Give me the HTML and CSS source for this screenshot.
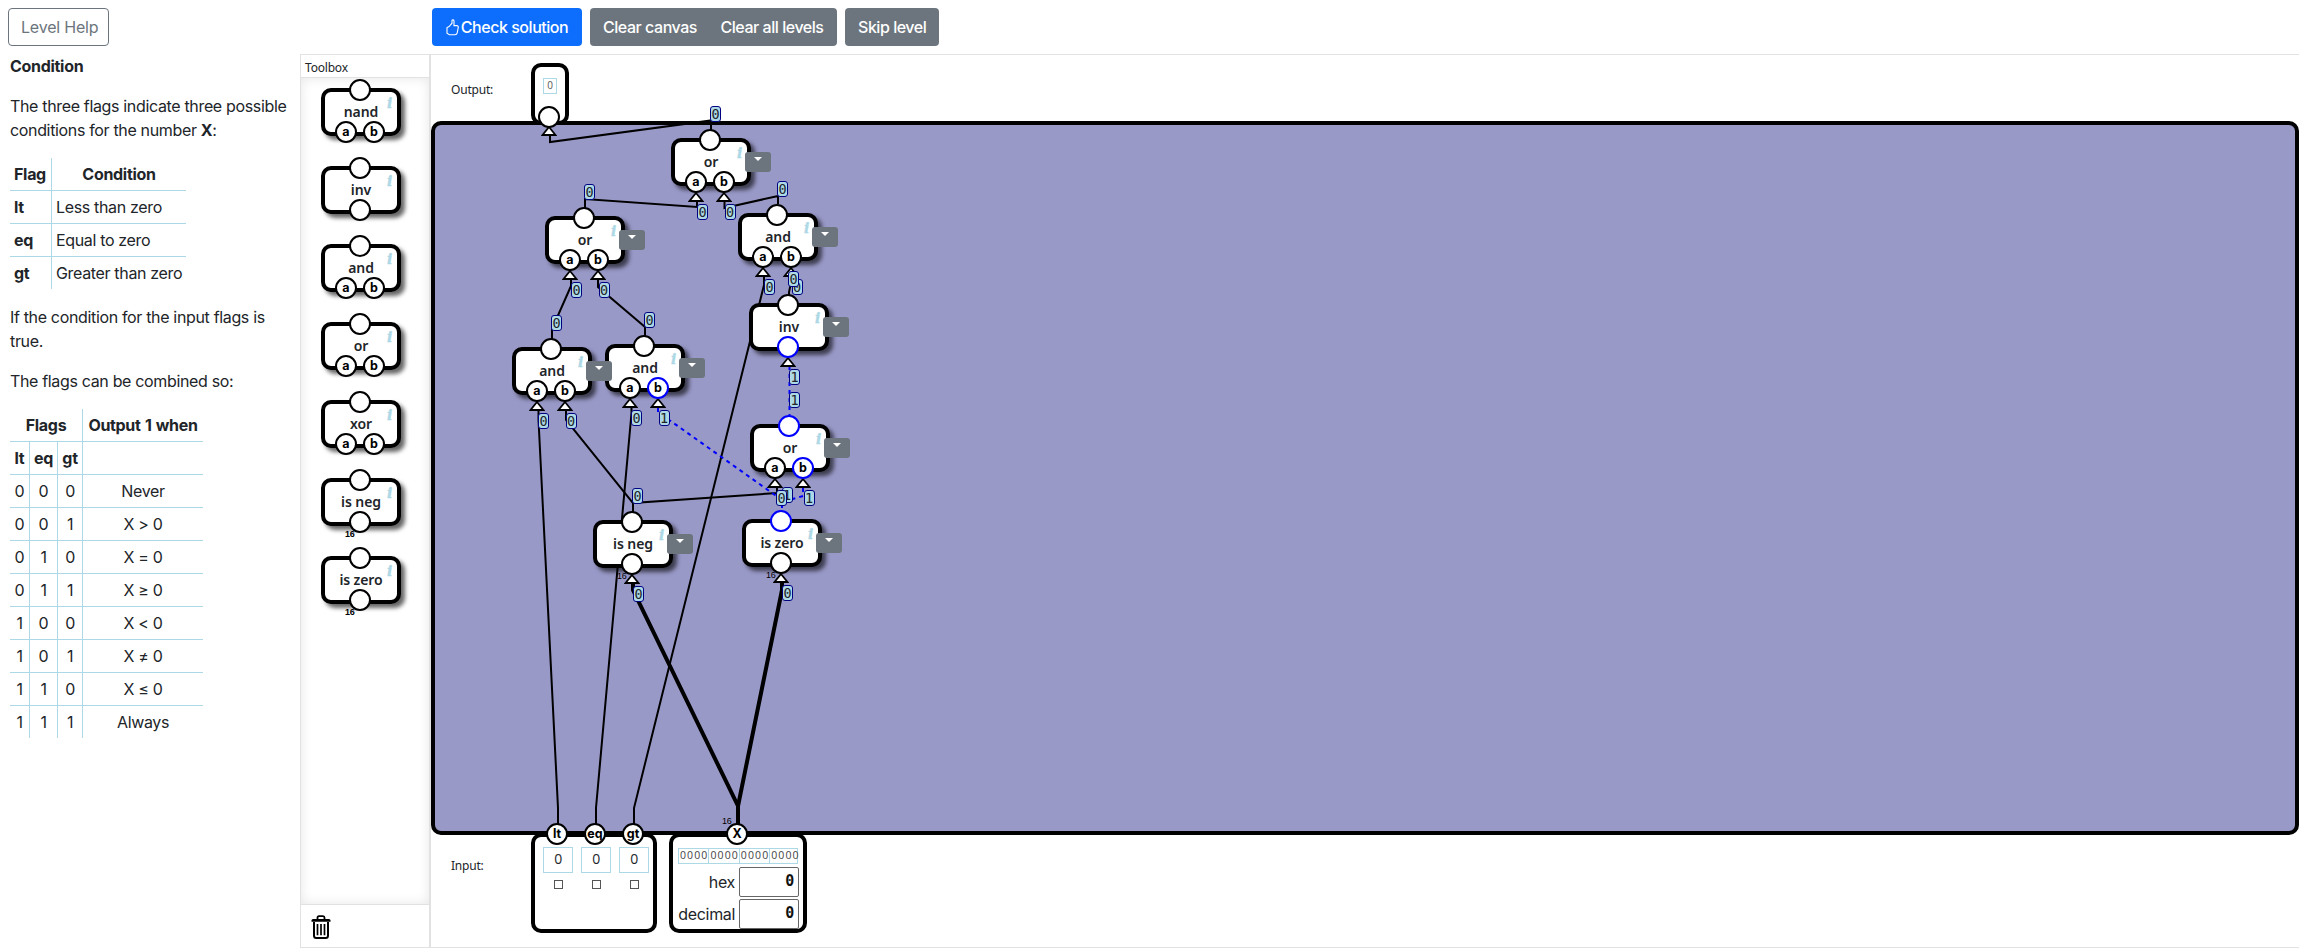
FILE: index.html
```html
<!DOCTYPE html>
<html lang="en">
<head>
<meta charset="utf-8">
<title>Condition</title>
<link rel="stylesheet" href="styles.css">
</head>
<body>
<div class="app">
  <aside class="help">
    <button class="btn btn-outline">Level Help</button>
    <div class="help-text">
      <p><b>Condition</b></p>
      <p>The three flags indicate three possible<br>conditions for the number <b>X</b>:</p>
      <table class="flags">
        <tr><th>Flag</th><th class="mid">Condition</th></tr>
        <tr><th>lt</th><td>Less than zero</td></tr>
        <tr><th>eq</th><td>Equal to zero</td></tr>
        <tr><th>gt</th><td>Greater than zero</td></tr>
      </table>
      <p>If the condition for the input flags is<br>true.</p>
      <p>The flags can be combined so:</p>
      <table class="combos">
        <colgroup><col class="c1"><col class="c2"><col class="c3"><col class="c4"></colgroup>
        <tr><th colspan="3">Flags</th><th class="wide">Output 1 when</th></tr>
        <tr><th>lt</th><th>eq</th><th>gt</th><th></th></tr>
        <tr><td>0</td><td>0</td><td>0</td><td>Never</td></tr>
        <tr><td>0</td><td>0</td><td>1</td><td>X &gt; 0</td></tr>
        <tr><td>0</td><td>1</td><td>0</td><td>X = 0</td></tr>
        <tr><td>0</td><td>1</td><td>1</td><td>X ≥ 0</td></tr>
        <tr><td>1</td><td>0</td><td>0</td><td>X &lt; 0</td></tr>
        <tr><td>1</td><td>0</td><td>1</td><td>X ≠ 0</td></tr>
        <tr><td>1</td><td>1</td><td>0</td><td>X ≤ 0</td></tr>
        <tr><td>1</td><td>1</td><td>1</td><td>Always</td></tr>
      </table>
    </div>
  </aside>
  <div class="main">
    <header class="bar">
      <button class="btn btn-primary"><svg class="thumb" viewBox="0 0 13 17"><path d="M3.2 7.5 6 4.2V1.6C6 .6 8 .5 8 2.2V6.6h2.6c1.5 0 1.9 1 1.6 2.2l-1 5c-.3 1.3-1 1.9-2.2 1.9H3.4L1 14.2V8.6L3.2 7.5"/></svg>Check solution</button>
      <div class="group"><button class="btn btn-grey">Clear canvas</button><button class="btn btn-grey">Clear all levels</button></div>
      <button class="btn btn-grey skip">Skip level</button>
    </header>
    <div class="work">
      <section class="toolbox">
        <div class="toolbox-title">Toolbox</div>
        <div class="tools" id="tools"></div>
        <div class="bin">
          <svg viewBox="0 0 20 24"><path d="M6.5 4V2.8Q6.5 1.2 8 1.2H12Q13.5 1.2 13.500 2.800V4" fill="none" stroke="#000" stroke-width="1.8"/><path d="M.5 6.800V5.600Q.5 4 2 4H18Q19.500 4 19.500 5.600V6.800Z"/><path d="M3 7V20.500Q3 23 5.200 23H14.800Q17 23 17 20.500V7" fill="none" stroke="#000" stroke-width="2"/><path d="M6.500 9V20.300M10 9V20.300M13.500 9V20.300" stroke="#000" stroke-width="1.700"/></svg>
        </div>
      </section>
      <section class="stage">
        <div class="io output">
          <span class="io-label">Output:</span>
          <div class="io-box out-box"><span class="bit small">0</span></div>
        </div>
        <div class="canvas"></div>
        <div class="io input">
          <span class="io-label">Input:</span>
          <div class="io-box flag-box">
            <div class="flag"><span class="bit">0</span><i class="check"></i></div>
            <div class="flag"><span class="bit">0</span><i class="check"></i></div>
            <div class="flag"><span class="bit">0</span><i class="check"></i></div>
          </div>
          <div class="io-box word-box">
            <div class="nibbles"><span>0000</span><span>0000</span><span>0000</span><span>0000</span></div>
            <label class="field">hex<span class="value">0</span></label>
            <label class="field">decimal<span class="value">0</span></label>
          </div>
        </div>
        <svg class="wires" viewBox="431 55 1868 892">
          <path d="M550 135V142L711 120.500V130"/>
          <path d="M697 199V207L585 199V208"/>
          <path d="M724.500 199V208L778 196V204"/>
          <path d="M571 277V286L552 329V340"/>
          <path d="M598 277V287L645 327V336"/>
          <path d="M764 275V285L634 808V825"/>
          <path d="M791 275V283L789 292V300"/>
          <path d="M538.500 409V420L558 808V825"/>
          <path d="M566 409V420L633 503V512"/>
          <path d="M631.500 406V413L596 808V825"/>
          <path d="M777 486V493L633 503V512"/>
          <path class="bus" d="M633 582V590L738 806V825"/>
          <path class="bus" d="M782 581V590L738 806V825"/>
          <path class="on" d="M789.500 366V415"/>
          <path class="on" d="M658 408V412L782 500V511"/>
          <path class="on" d="M803 488V496L782 502"/>
        </svg>
        <div class="nodes" id="nodes"></div>
      </section>
    </div>
  </div>
</div>
<script src="app.js"></script>
</body>
</html>
```
FILE: styles.css
```css
* { box-sizing: border-box; }
body {
  margin: 0;
  font: 16px/24px Inter, "Liberation Sans", sans-serif;
  letter-spacing: -0.34px;
  color: #212529;
  background: #fff;
}
.app { display: flex; width: 2299px; height: 948px; overflow: hidden; }
.help { width: 300px; padding: 8px 0 0 8px; flex: none; }
.help-text { padding: 8px 0 0 2px; white-space: nowrap; }
p { margin: 0 0 16px; }
b, th { font-weight: 700; letter-spacing: -0.3px; }

.btn {
  height: 38px;
  padding: 0 12px;
  border: 1px solid transparent;
  border-radius: 4px;
  font: inherit;
  letter-spacing: -0.46px;
  white-space: nowrap;
  color: #fff;
}
.btn-outline { display: block; width: 101px; background: #fff; border-color: #6c757d; color: #6c757d; letter-spacing: -0.2px; }
.btn-primary { width: 150px; background: #0d6efd; display: flex; align-items: center; justify-content: center; font-weight: 500; }
.btn-grey { background: #6c757d; font-weight: 500; }
.thumb { width: 13px; height: 17px; margin-right: 2px; fill: none; stroke: #fff; stroke-width: 1.1; }

table { border-collapse: collapse; margin-bottom: 16px; table-layout: fixed; }
th, td { height: 33px; padding: 4px; line-height: 24px; border: 1px solid lightblue; }
tr:first-child > * { border-top: 0; height: 32px; padding-bottom: 3px; }
tr:last-child > * { border-bottom: 0; }
tr > :first-child { border-left: 0; }
tr > :last-child { border-right: 0; }
.flags { width: 176px; }
.flags th { width: 41.500px; text-align: left; }
.flags .mid { width: auto; text-align: center; }
.combos { width: 193px; text-align: center; }
.combos th, .combos td { padding-left: 0; padding-right: 0; }
.combos .wide { letter-spacing: -0.35px; word-spacing: 1px; }
.c1 { width: 19.500px; }
.c2 { width: 28px; }
.c3 { width: 25px; }

.main { flex: 1; display: flex; flex-direction: column; }
.bar { height: 54px; flex: none; padding: 8px 0 0 132px; display: flex; gap: 8px; }
.group { display: flex; width: 247px; }
.group .btn:first-child { border-radius: 4px 0 0 4px; width: 117px; }
.group .btn:last-child { border-radius: 0 4px 4px 0; flex: 1; }
.skip { width: 94px; }
.work { flex: 1; display: flex; border: 1px solid #e2e2e2; border-right: 0; }

.toolbox { width: 130px; flex: none; display: flex; flex-direction: column; border-right: 2px solid #e2e2e2; }
.toolbox-title, .io-label { font: 12px/14px "Noto Sans", sans-serif; letter-spacing: -0.2px; }
.toolbox-title { height: 23px; padding: 6px 0 0 4px; border-bottom: 1px solid #e2e2e2; }
.tools {
  flex: 1;
  padding: 10px 0 0 20px;
  display: flex;
  flex-direction: column;
  gap: 30px;
  box-shadow: inset 0 0 12px rgba(0, 0, 0, .1);
}
.bin { height: 43px; border-top: 1px solid #e2e2e2; padding: 10px 0 0 10px; }
.bin svg { width: 20px; height: 24px; display: block; }

.stage { flex: 1; position: relative; display: flex; flex-direction: column; }
.io { display: flex; padding-left: 20px; }
.io-label { width: 80px; flex: none; }
.output { height: 66px; padding-top: 8px; }
.output .io-label { padding-top: 20px; }
.io-box { border: 4px solid #000; border-radius: 10px; background: #fff; }
.out-box { width: 38px; height: 62px; display: flex; justify-content: center; padding-top: 11px; }
.canvas { height: 714px; border: 4px solid #000; border-radius: 10px; background: #9999c8; }
.bit {
  width: 30px;
  height: 26px;
  border: 1px solid lightblue;
  font: 14px/22px "Open Sans", sans-serif;
  text-align: center;
}
.bit.small { width: 14px; height: 16px; font-size: 10px; line-height: 13px; color: #555; }
.input { margin-top: -2px; height: 100px; }
.input .io-label { padding-top: 26px; }
.flag-box { width: 126px; display: flex; gap: 8px; padding: 10px 0 0 8px; }
.flag { display: flex; flex-direction: column; align-items: center; gap: 7px; }
.check { width: 9px; height: 9px; border: 1px solid #555; }
.word-box { width: 138px; margin-left: 12px; padding: 11px 4px 0 5px; }
.nibbles { width: 120px; height: 16px; display: flex; border: 1px solid lightblue; }
.nibbles span { flex: 1; text-align: center; font: 10.500px/13px "Open Sans", sans-serif; letter-spacing: 1.100px; padding-left: 1px; color: #444; }
.nibbles span + span { border-left: 1px solid lightblue; }
.field { display: flex; justify-content: flex-end; align-items: center; gap: 4px; margin-top: 3px; height: 29px; }
.field + .field { margin-top: 3px; }
.value {
  width: 60px;
  height: 30px;
  padding-right: 4px;
  border: 1px solid #666;
  border-radius: 2px;
  font: bold 15px/27px "DejaVu Sans Mono", monospace;
  text-align: right;
  color: #111;
}

.wires { position: absolute; left: 0; top: 0; width: 1868px; height: 892px; fill: none; stroke: #000; stroke-width: 2; }
.wires .bus { stroke-width: 4; }
.wires .on { stroke: #00f; stroke-dasharray: 4 4; }
.nodes { position: absolute; left: 0; top: 0; }
.nodes > * { position: absolute; }

.gate { position: relative; width: 80px; height: 48px; flex: none; }
.nodes .gate { position: absolute; }
.gate-body {
  height: 48px;
  border: 4px solid #000;
  border-radius: 10px;
  background: #fff;
  box-shadow: 4px 4px 4px rgba(0, 0, 0, .6);
  font: 600 14px/39px "Noto Sans", sans-serif;
  letter-spacing: -0.1px;
  text-align: center;
}
.info {
  position: absolute;
  left: 66px;
  top: 7px;
  font: italic bold 14px/16px "DejaVu Serif", serif;
  color: lightblue;
  -webkit-text-stroke: .4px lightblue;
}
.port {
  position: absolute;
  width: 22px;
  height: 22px;
  margin: -11px 0 0 -11px;
  border: 2px solid #000;
  border-radius: 50%;
  background: #fff;
  font: bold 12.500px/17px Inter, sans-serif;
  letter-spacing: 0;
  display: flex;
  justify-content: center;
  color: #000;
  white-space: nowrap;
}
.port.on { border-color: #00f; }
.width { position: absolute; font: 9px/10px "Liberation Sans", sans-serif; letter-spacing: -0.2px; color: #000; }
.tools .width { font-weight: bold; }
.arrow { position: absolute; width: 16px; height: 10px; margin-left: -8px; fill: #fff; stroke: #000; stroke-width: 1.800; }
.menu { position: absolute; z-index: 1; left: 74px; top: 14px; width: 26px; height: 20px; border-radius: 3px; background: #6c757d; }
.menu::before {
  content: "";
  position: absolute;
  left: 9px;
  top: 5px;
  border: 4px solid transparent;
  border-top-color: #fff;
  border-bottom: 0;
}
.signal {
  width: 11px;
  height: 16px;
  margin: -8px 0 0 -5.500px;
  border: 1px solid #000080;
  border-radius: 3px;
  background: lightblue;
  font: 13.500px/14px "DejaVu Sans Mono", monospace;
  letter-spacing: 0;
  display: flex;
  justify-content: center;
  color: #212529;
}
```
FILE: app.js
```javascript
const ORIGIN = { x: 431, y: 55 };
const ARROW = '<path d="M8 1L14.500 9H1.500Z"/>';

function port(x, y, text, on) {
  return `<span class="port${on ? " on" : ""}" style="left:${x}px;top:${y}px">${text}</span>`;
}
function arrow(x, y) {
  return `<svg class="arrow" viewBox="0 0 16 10" style="left:${x}px;top:${y}px">${ARROW}</svg>`;
}
function gate(name, opts = {}) {
  const on = opts.on || "";
  const unary = name === "inv" || name.startsWith("is");
  const inputs = unary ? [[39, "", "i"]] : [[25, "a", "a"], [53, "b", "b"]];
  let html = `<div class="gate-body">${name}</div><span class="info">i</span>`;
  html += port(39, 2, "", on.includes("o"));
  if (name.startsWith("is")) html += '<span class="width" style="left:24px;top:51px">16</span>';
  for (const [x, text, key] of inputs) {
    if (opts.placed) html += arrow(x, 53.5);
    html += port(x, 44, text, on.includes(key));
  }
  if (opts.placed) html += '<span class="menu"></span>';
  const pos = opts.placed ? ` style="left:${opts.x - ORIGIN.x}px;top:${opts.y - ORIGIN.y}px"` : "";
  return `<div class="gate"${pos}>${html}</div>`;
}

document.getElementById("tools").innerHTML =
  ["nand", "inv", "and", "or", "xor", "is neg", "is zero"].map(n => gate(n)).join("");

const gates = [
  ["or", 671, 138], ["or", 545, 216], ["and", 738, 213], ["inv", 749, 303, "i"],
  ["and", 512, 347], ["and", 605, 344, "b"], ["or", 750, 424, "ob"],
  ["is neg", 593, 520], ["is zero", 742, 519, "o"]
];
const signals = [
  [715.5, 114, 0], [589.5, 192, 0], [702.5, 212, 0], [730, 212, 0], [782.5, 189, 0],
  [576.5, 290, 0], [604, 290, 0], [556.5, 323, 0], [649.5, 320, 0], [769.5, 287, 0],
  [797, 287, 0], [793.5, 279, 0], [794.5, 377, 1], [794.5, 400, 1], [543.5, 421, 0],
  [571, 421, 0], [636.5, 418, 0], [664, 418, 1], [637.5, 496, 0], [787, 495, 1],
  [781.5, 498, 0], [809, 498, 1], [638.5, 594, 0], [787.5, 593, 0]
];
const terminals = [[549, 117, ""], [557, 834, "lt"], [595, 834, "eq"], [633, 834, "gt"], [737, 834, "X"]];

document.getElementById("nodes").innerHTML =
  gates.map(([n, x, y, on]) => gate(n, { placed: true, x, y, on })).join("") +
  arrow(549 - ORIGIN.x, 126 - ORIGIN.y) +
  terminals.map(([x, y, t]) => port(x - ORIGIN.x, y - ORIGIN.y, t)).join("") +
  `<span class="width" style="left:${722 - ORIGIN.x}px;top:${816 - ORIGIN.y}px">16</span>` +
  signals.map(([x, y, v]) =>
    `<span class="signal" style="left:${x - ORIGIN.x}px;top:${y - ORIGIN.y}px">${v}</span>`).join("");
```
